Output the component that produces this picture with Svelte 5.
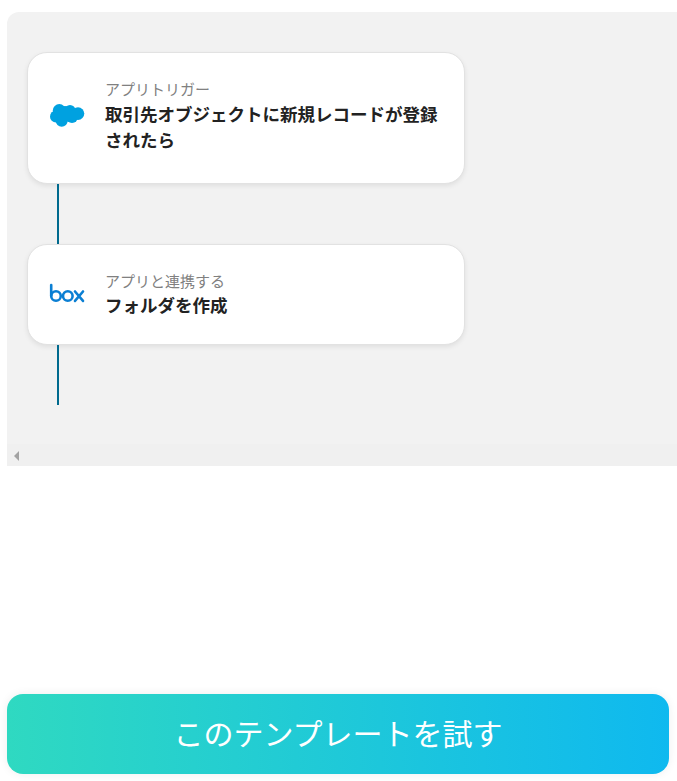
<script>
  const fontNote = 'flow';
</script>

<div class="page" data-layout={fontNote}>
  <section class="flow">
    <div class="canvas">
      <article class="card tall">
        <svg class="logo" viewBox="0 0 40 30" width="40" height="30" aria-label="Salesforce">
          <g fill="#00a1e0">
            <circle cx="12.3" cy="9.5" r="6.5" />
            <circle cx="23" cy="9.5" r="5.5" />
            <circle cx="31" cy="12.6" r="6.3" />
            <circle cx="9" cy="15.5" r="6" />
            <circle cx="14.7" cy="19.7" r="6" />
            <circle cx="25" cy="16" r="6" />
            <circle cx="18" cy="13" r="8" />
          </g>
        </svg>
        <div class="copy">
          <span class="label">アプリトリガー</span>
          <strong class="title">取引先オブジェクトに新規レコードが登録されたら</strong>
        </div>
      </article>
      <div class="line"></div>
      <article class="card short">
        <svg class="logo" viewBox="1 1.5 40 30" width="40" height="30" aria-label="box">
          <g fill="none" stroke="#0b7fd3" stroke-width="2.6" stroke-linecap="round">
            <path d="M5.2 6.5V17" />
            <circle cx="10" cy="17.5" r="4.8" />
            <circle cx="21.8" cy="17.5" r="4.8" />
            <path d="M29 13l8 9.4M37 13l-8 9.4" />
          </g>
        </svg>
        <div class="copy">
          <span class="label">アプリと連携する</span>
          <strong class="title">フォルダを作成</strong>
        </div>
      </article>
      <div class="line"></div>
    </div>
    <div class="scrollbar"><span class="arrow"></span></div>
  </section>

  <button class="cta" type="button">このテンプレートを試す</button>
</div>

<style>
  :global(body) {
    margin: 0;
    background: #fff;
  }

  .page {
    width: 677px;
    height: 781px;
    overflow: hidden;
    box-sizing: border-box;
    padding: 12px 0 0 7px;
    font-family: "Noto Sans CJK JP", "Noto Sans", sans-serif;
  }

  .flow {
    height: 454px;
    background: #f2f2f2;
    border-radius: 12px 0 0 0;
    display: flex;
    flex-direction: column;
    justify-content: space-between;
  }

  .canvas {
    padding: 40px 0 0 20px;
    display: flex;
    flex-direction: column;
    align-items: flex-start;
  }

  .card {
    width: 438px;
    box-sizing: border-box;
    background: #fff;
    border: 1px solid #e2e2e2;
    border-radius: 20px;
    box-shadow: 0 2px 5px rgba(0, 0, 0, 0.08);
    display: flex;
    align-items: center;
    padding: 0 20px 0 19px;
    gap: 18px;
  }

  .tall { height: 132px; padding-bottom: 4px; }
  .short { height: 101px; }
  .short .title { margin-top: 1px; }

  .logo { flex: none; }

  .copy {
    display: flex;
    flex-direction: column;
    min-width: 0;
  }

  .label {
    font-size: 15px;
    line-height: 20px;
    color: #808080;
  }

  .title {
    font-size: 17.5px;
    line-height: 26px;
    font-weight: 700;
    color: #222;
    margin-top: 2px;
  }

  .line {
    width: 2px;
    height: 60px;
    margin-left: 30px;
    background: #006a8e;
  }

  .scrollbar {
    height: 22px;
    background: #f0f0f0;
    display: flex;
    align-items: center;
    padding-left: 7px;
  }

  .arrow {
    width: 0;
    height: 0;
    border-style: solid;
    border-width: 5px 5px 5px 0;
    border-color: transparent #a3a3a3 transparent transparent;
    margin-top: 1px;
  }

  .cta {
    display: block;
    width: 662px;
    height: 80px;
    margin-top: 228px;
    border: 0;
    border-radius: 16px;
    padding: 0 0 4px;
    background: linear-gradient(90deg, #2fd9c1 0%, #0fb9ef 100%);
    box-shadow: 0 0 10px rgba(0, 0, 0, 0.07);
    color: #fff;
    font-family: inherit;
    font-size: 30px;
    font-weight: 400;
    line-height: 76px;
  }
</style>
